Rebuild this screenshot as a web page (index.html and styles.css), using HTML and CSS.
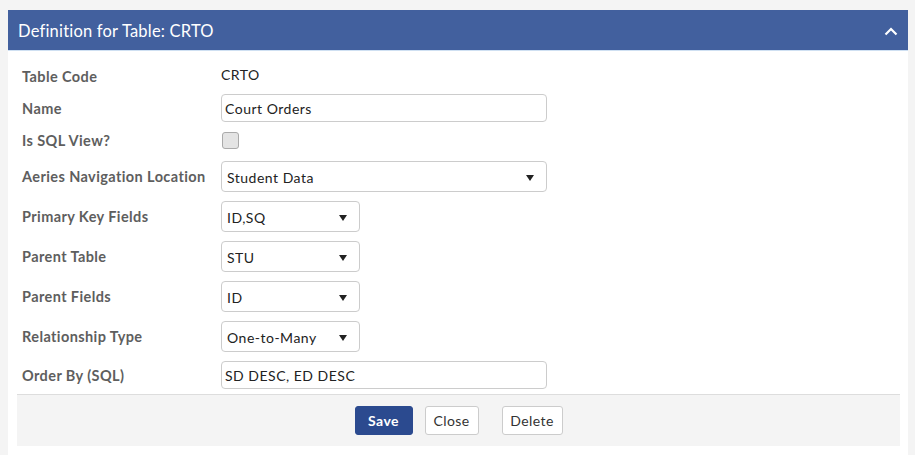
FILE: index.html
```html
<!DOCTYPE html>
<html>
<head>
<meta charset="utf-8">
<link rel="stylesheet" href="styles.css">
</head>
<body>
<div class="panel">
  <div class="panel-head">
    <span class="title">Definition for Table: CRTO</span>
    <svg class="chev" width="14" height="9" viewBox="0 0 14 9"><path d="M1.5 7.5 L7 2 L12.5 7.5" fill="none" stroke="#fff" stroke-width="2.2"/></svg>
  </div>
  <div class="panel-body">
    <div class="form">
      <div class="row">
        <label class="lbl">Table Code</label>
        <span class="val">CRTO</span>
      </div>
      <div class="row tight">
        <label class="lbl">Name</label>
        <div class="input wide">Court Orders</div>
      </div>
      <div class="row tight">
        <label class="lbl">Is SQL View?</label>
        <span class="check"></span>
      </div>
      <div class="row sel mid">
        <label class="lbl">Aeries Navigation Location</label>
        <div class="select wide"><span>Student Data</span><i class="arrow"></i></div>
      </div>
      <div class="row sel">
        <label class="lbl">Primary Key Fields</label>
        <div class="select small"><span>ID,SQ</span><i class="arrow"></i></div>
      </div>
      <div class="row sel">
        <label class="lbl">Parent Table</label>
        <div class="select small"><span>STU</span><i class="arrow"></i></div>
      </div>
      <div class="row sel">
        <label class="lbl">Parent Fields</label>
        <div class="select small"><span>ID</span><i class="arrow"></i></div>
      </div>
      <div class="row sel">
        <label class="lbl">Relationship Type</label>
        <div class="select small"><span>One-to-Many</span><i class="arrow"></i></div>
      </div>
      <div class="row">
        <label class="lbl">Order By (SQL)</label>
        <div class="input wide">SD DESC, ED DESC</div>
      </div>
    </div>
    <div class="footer">
      <button class="btn primary">Save</button>
      <button class="btn close">Close</button>
      <button class="btn delete">Delete</button>
    </div>
  </div>
</div>
</body>
</html>
```

FILE: styles.css
```css
* { box-sizing: border-box; }
html, body { margin: 0; padding: 0; }
body {
  background: #f4f4f4;
  font-family: Lato, "Open Sans", sans-serif;
  width: 915px;
  height: 455px;
  overflow: hidden;
  padding: 10px 7px 0 8px;
}
.panel {
  width: 900px;
  height: 445px;
  background: #fff;
}
.panel-head {
  height: 41px;
  background: #42609e;
  border-bottom: 1px solid #cfe0f2;
  display: flex;
  align-items: center;
  justify-content: space-between;
  padding: 1px 10px 0 10px;
}
.title {
  color: #fff;
  font-size: 16.5px;
  letter-spacing: 0.2px;
}
.chev { margin-top: 2px; }
.panel-body {
  padding: 11px 8px 0 9px;
}
.form { padding-left: 5px; }
.row {
  display: flex;
  align-items: center;
  height: 28px;
  margin-top: 9px;
}
.row:first-child { margin-top: 0; }
.row.tight { margin-top: 4px; }
.row.sel { height: 31px; }
.row.mid { margin-top: 7px; }
.lbl {
  width: 199px;
  flex: none;
  color: #5e5e5e;
  font-size: 14.5px;
  font-weight: 700;
  letter-spacing: 0.4px;
}
.val {
  color: #222;
  font-size: 14px;
  letter-spacing: 0.5px;
  margin-top: -4px;
}
.input, .select {
  height: 100%;
  border: 1px solid #ccc;
  border-radius: 4px;
  background: #fff;
  color: #222;
  font-size: 14px;
  letter-spacing: 0.5px;
  display: flex;
  align-items: center;
  padding-top: 1px;
}
.input { padding-left: 3px; }
.select {
  padding: 1px 12px 0 5px;
  justify-content: space-between;
}
.wide { width: 326px; }
.small { width: 139px; }
.arrow {
  width: 0;
  height: 0;
  border-left: 4px solid transparent;
  border-right: 4px solid transparent;
  border-top: 6px solid #222;
  margin-top: 1px;
}
.check {
  width: 17px;
  height: 17px;
  margin-left: 1px;
  border: 1px solid #aaa;
  border-radius: 3px;
  background: #e4e4e4;
}
.footer {
  margin-top: 5px;
  height: 52px;
  background: #f4f4f4;
  border-top: 1px solid #ddd;
  display: flex;
  justify-content: center;
  align-items: flex-start;
  padding-top: 11px;
  gap: 12px;
}
.btn {
  height: 29px;
  border: 1px solid #ccc;
  border-radius: 3px;
  background: #fff;
  color: #333;
  font-family: Lato, "Open Sans", sans-serif;
  font-size: 14px;
  letter-spacing: 0.4px;
  padding: 0;
}
.btn.primary {
  background: #2b4a8f;
  border-color: #2b4a8f;
  color: #fff;
  font-weight: 700;
  width: 58px;
}
.btn.close { width: 54px; }
.btn.delete { width: 61px; margin-left: 11px; }
```
